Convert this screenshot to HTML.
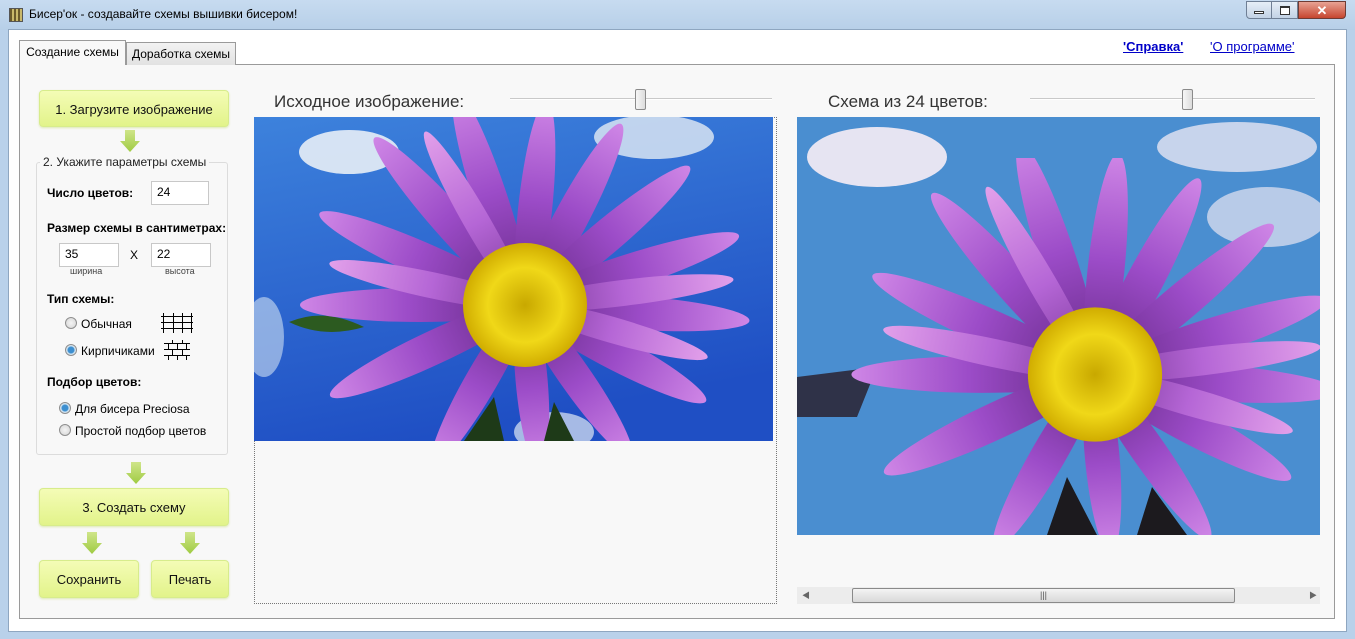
<!DOCTYPE html>
<html><head><meta charset="utf-8"><style>
*{margin:0;padding:0;box-sizing:border-box}
body{width:1355px;height:639px;overflow:hidden;background:#b9d1ea;font-family:"Liberation Sans","Noto Sans CJK SC",sans-serif;font-size:12px;color:#000;position:relative}
.abs{position:absolute}
.title{left:0;top:0;width:1355px;height:30px;background:linear-gradient(#c7dbf0,#b7cfe8)}
.client{left:8px;top:29px;width:1339px;height:603px;background:#fff;border:1px solid #8ea6c0}
.panel{left:19px;top:64px;width:1316px;height:555px;background:#f8f8f8;border:1px solid #9a9a9a}
.tab{top:42px;height:23px;border:1px solid #9a9a9a;border-bottom:none;font-size:12px;padding-top:4px;text-align:center}
.btn{background:linear-gradient(#f4fcb6,#e2f38a);border:1px solid #d7ec8c;border-radius:4px;text-align:center;font-size:13px;color:#111;box-shadow:0 1px 2px #dde8b0}
.inp{background:#fff;border:1px solid #c8c8c8;font-size:12px;padding:3px 5px;height:24px}
.b{font-weight:bold;font-size:12px}
.rad{width:12px;height:12px;border-radius:50%;border:1px solid #8f8f8f;background:radial-gradient(#f4f4f4,#d4d4d4)}
.rad.on{background:radial-gradient(#3d8fd0 0 3px,#cfe3f2 4px,#e8e8e8)}
.cap{font-size:17px;color:#333}
.track{height:2px;background:#c9c9c9;border-bottom:1px solid #fff}
.thumb{width:11px;height:21px;border:1px solid #8a8a8a;border-radius:2px;background:linear-gradient(90deg,#f6f6f6,#dcdcdc)}
</style></head><body>
<div class="abs title"></div>
<div class="abs" style="left:9px;top:8px;width:14px;height:14px;background:repeating-linear-gradient(90deg,#6b5a2a 0 2px,#c9b86a 2px 4px);border:1px solid #555"></div>
<div class="abs" style="left:29px;top:7px;font-size:12px">Бисер'ок - создавайте схемы вышивки бисером!</div>
<div class="abs" style="left:1246px;top:1px;width:26px;height:18px;border:1px solid #6f7f95;border-radius:0 0 0 4px;background:linear-gradient(#e6eef7,#c2d2e5)"><div style="margin:9px auto 0;width:10px;height:3px;background:#fff;border:1px solid #333"></div></div>
<div class="abs" style="left:1272px;top:1px;width:26px;height:18px;border:1px solid #6f7f95;border-left:none;background:linear-gradient(#e6eef7,#c2d2e5)"><div style="margin:4px auto 0;width:10px;height:9px;background:#fff;border:1px solid #333;border-top-width:2px"></div></div>
<div class="abs" style="left:1298px;top:1px;width:48px;height:18px;border:1px solid #6f3b34;border-radius:0 0 4px 0;background:linear-gradient(#e8a394,#c6452f);color:#fff;font-weight:bold;text-align:center;font-size:13px;line-height:17px">✕</div>
<div class="abs client"></div>
<div class="abs panel"></div>
<div class="abs tab" style="left:19px;width:107px;top:40px;height:25px;background:#f8f8f8;z-index:2">Создание схемы</div>
<div class="abs tab" style="left:126px;width:110px;background:linear-gradient(#f2f2f2,#e2e2e2)">Доработка схемы</div>
<div class="abs" style="left:1123px;top:39px;font-size:13px;color:#0000c8;font-weight:bold;text-decoration:underline">'Справка'</div>
<div class="abs" style="left:1210px;top:39px;font-size:13px;color:#0000c8;text-decoration:underline">'О программе'</div>

<div class="abs btn" style="left:39px;top:90px;width:190px;height:37px;line-height:37px">1. Загрузите изображение</div>
<svg class="abs" style="left:120px;top:130px" width="20" height="24"><defs><linearGradient id="ag" x1="0" x2="0" y1="0" y2="1"><stop offset="0" stop-color="#cfe58a"/><stop offset="1" stop-color="#9fcb42"/></linearGradient></defs><path d="M5 0H15V11H20L10 22L0 11H5Z" fill="url(#ag)"/></svg>
<div class="abs" style="left:36px;top:162px;width:192px;height:293px;border:1px solid #dcdcdc;border-radius:3px"></div>
<div class="abs" style="left:40px;top:155px;padding:0 3px;background:#f8f8f8;font-size:12px;color:#222">2. Укажите параметры схемы</div>
<div class="abs b" style="left:47px;top:186px">Число цветов:</div>
<div class="abs inp" style="left:151px;top:181px;width:58px">24</div>
<div class="abs b" style="left:47px;top:221px">Размер схемы в сантиметрах:</div>
<div class="abs inp" style="left:59px;top:243px;width:60px">35</div>
<div class="abs" style="left:130px;top:248px">X</div>
<div class="abs inp" style="left:151px;top:243px;width:60px">22</div>
<div class="abs" style="left:70px;top:266px;font-size:9px;color:#444">ширина</div>
<div class="abs" style="left:165px;top:266px;font-size:9px;color:#444">высота</div>
<div class="abs b" style="left:47px;top:292px">Тип схемы:</div>
<div class="abs rad" style="left:65px;top:317px"></div><div class="abs" style="left:81px;top:317px">Обычная</div>
<svg class="abs" style="left:161px;top:313px" width="32" height="20" stroke="#000" stroke-width="1" fill="none"><path d="M0 3.5H32M0 9.5H32M0 15.5H32M2.5 0V20M12.5 0V20M21.5 0V20M30.5 0V20"/></svg>
<div class="abs rad on" style="left:65px;top:344px"></div><div class="abs" style="left:81px;top:344px">Кирпичиками</div>
<svg class="abs" style="left:164px;top:340px" width="26" height="20" stroke="#000" stroke-width="1" fill="none"><path d="M0 3.5H26M0 9.5H26M0 15.5H26M8.5 0V4M18.5 0V4M4.5 4V10M13.5 4V10M22.5 4V10M8.5 10V16M18.5 10V16M4.5 16V20M13.5 16V20M22.5 16V20"/></svg>
<div class="abs b" style="left:47px;top:375px">Подбор цветов:</div>
<div class="abs rad on" style="left:59px;top:402px"></div><div class="abs" style="left:75px;top:402px">Для бисера Preciosa</div>
<div class="abs rad" style="left:59px;top:424px"></div><div class="abs" style="left:75px;top:424px">Простой подбор цветов</div>
<svg class="abs" style="left:126px;top:462px" width="20" height="24"><path d="M5 0H15V11H20L10 22L0 11H5Z" fill="url(#ag)"/></svg>
<div class="abs btn" style="left:39px;top:488px;width:190px;height:38px;line-height:38px">3. Создать схему</div>
<svg class="abs" style="left:82px;top:532px" width="20" height="24"><path d="M5 0H15V11H20L10 22L0 11H5Z" fill="url(#ag)"/></svg>
<svg class="abs" style="left:180px;top:532px" width="20" height="24"><path d="M5 0H15V11H20L10 22L0 11H5Z" fill="url(#ag)"/></svg>
<div class="abs btn" style="left:39px;top:560px;width:100px;height:38px;line-height:38px">Сохранить</div>
<div class="abs btn" style="left:151px;top:560px;width:78px;height:38px;line-height:38px">Печать</div>

<div class="abs cap" style="left:274px;top:92px">Исходное изображение:</div>
<div class="abs track" style="left:510px;top:98px;width:262px"></div>
<div class="abs thumb" style="left:635px;top:89px"></div>
<div class="abs cap" style="left:828px;top:92px">Схема из 24 цветов:</div>
<div class="abs track" style="left:1030px;top:98px;width:285px"></div>
<div class="abs thumb" style="left:1182px;top:89px"></div>
<div class="abs" style="left:254px;top:117px;width:523px;height:487px;border:1px dotted #777"></div>

<svg width="0" height="0" style="position:absolute"><defs>
<linearGradient id="sky" x1="0" y1="0" x2="0.3" y2="1"><stop offset="0" stop-color="#3d82dc"/><stop offset="1" stop-color="#1f4fc4"/></linearGradient>
<linearGradient id="pet" x1="0" x2="1"><stop offset="0" stop-color="#cf86e6"/><stop offset="0.45" stop-color="#9c4cc8"/><stop offset="1" stop-color="#5a2278"/></linearGradient>
<linearGradient id="pet2" x1="0" x2="1"><stop offset="0" stop-color="#e2a0ea"/><stop offset="0.5" stop-color="#b566d6"/><stop offset="1" stop-color="#6e2e8c"/></linearGradient>
<radialGradient id="ctr"><stop offset="0" stop-color="#c8a800"/><stop offset="0.6" stop-color="#f0d818"/><stop offset="1" stop-color="#d0ac00"/></radialGradient>
<symbol id="fl" viewBox="-300 -200 600 400">
<g>
<ellipse rx="120" ry="17" cx="-105" fill="url(#pet)" transform="rotate(0)"/>
<ellipse rx="120" ry="17" cx="-105" fill="url(#pet)" transform="rotate(24)"/>
<ellipse rx="120" ry="17" cx="-105" fill="url(#pet)" transform="rotate(48)"/>
<ellipse rx="120" ry="17" cx="-105" fill="url(#pet)" transform="rotate(72)"/>
<ellipse rx="110" ry="17" cx="-95" fill="url(#pet)" transform="rotate(96)"/>
<ellipse rx="110" ry="17" cx="-95" fill="url(#pet)" transform="rotate(118)"/>
<ellipse rx="115" ry="17" cx="-100" fill="url(#pet)" transform="rotate(140)"/>
<ellipse rx="120" ry="17" cx="-105" fill="url(#pet)" transform="rotate(162)"/>
<ellipse rx="120" ry="17" cx="-105" fill="url(#pet)" transform="rotate(184)"/>
<ellipse rx="110" ry="17" cx="-95" fill="url(#pet)" transform="rotate(208)"/>
<ellipse rx="100" ry="16" cx="-85" fill="url(#pet)" transform="rotate(235)"/>
<ellipse rx="90" ry="16" cx="-75" fill="url(#pet)" transform="rotate(265)"/>
<ellipse rx="100" ry="16" cx="-85" fill="url(#pet)" transform="rotate(300)"/>
<ellipse rx="115" ry="17" cx="-100" fill="url(#pet)" transform="rotate(335)"/>
<ellipse rx="105" ry="13" cx="-95" fill="url(#pet2)" transform="rotate(12)"/>
<ellipse rx="105" ry="13" cx="-95" fill="url(#pet2)" transform="rotate(60)"/>
<ellipse rx="110" ry="13" cx="-100" fill="url(#pet2)" transform="rotate(173)"/>
<ellipse rx="100" ry="13" cx="-90" fill="url(#pet2)" transform="rotate(196)"/>
</g>
<circle r="62" fill="url(#ctr)"/>
</symbol></defs></svg>

<svg class="abs" style="left:254px;top:117px" width="519" height="324" viewBox="0 0 519 324">
<rect width="519" height="324" fill="url(#sky)"/>
<ellipse cx="95" cy="35" rx="50" ry="22" fill="#e8eef6" opacity="0.9"/>
<ellipse cx="400" cy="20" rx="60" ry="22" fill="#d8e4f2" opacity="0.85"/>
<ellipse cx="10" cy="220" rx="20" ry="40" fill="#cfe0f2" opacity="0.6"/>
<ellipse cx="300" cy="315" rx="40" ry="20" fill="#dfe8f4" opacity="0.7"/>
<path d="M35 205 Q70 190 110 210 Q70 222 35 205Z" fill="#2c5a20"/>
<use href="#fl" x="-29" y="-12" width="600" height="400"/>
<path d="M210 324 L240 280 L250 324Z M290 324 L300 285 L320 324Z" fill="#1e3a18"/>
</svg>

<svg class="abs" style="left:797px;top:117px" width="523" height="418" viewBox="0 0 523 418">
<rect width="523" height="418" fill="#4a8ed0"/>
<ellipse cx="80" cy="40" rx="70" ry="30" fill="#e6e4f2"/>
<ellipse cx="440" cy="30" rx="80" ry="25" fill="#c7d4ec"/>
<ellipse cx="470" cy="100" rx="60" ry="30" fill="#b8cbe8"/>
<path d="M0 260 L80 250 L60 300 L0 300Z" fill="#2a2230" opacity="0.85"/>
<use href="#fl" x="-27" y="41" width="650" height="433"/>
<path d="M250 418 L270 360 L300 418Z M340 418 L355 370 L390 418Z" fill="#1c1a1e"/>
</svg>

<div class="abs" style="left:797px;top:587px;width:523px;height:17px;background:#ececec"></div>
<div class="abs" style="left:802px;top:590px;font-size:8px;color:#666">◀</div>
<div class="abs" style="left:1309px;top:590px;font-size:8px;color:#666">▶</div>
<div class="abs" style="left:852px;top:588px;width:383px;height:15px;border:1px solid #8a8a8a;border-radius:2px;background:linear-gradient(#f4f4f4,#d8d8d8);text-align:center;font-size:9px;line-height:13px;color:#555">|||</div>
</body></html>
